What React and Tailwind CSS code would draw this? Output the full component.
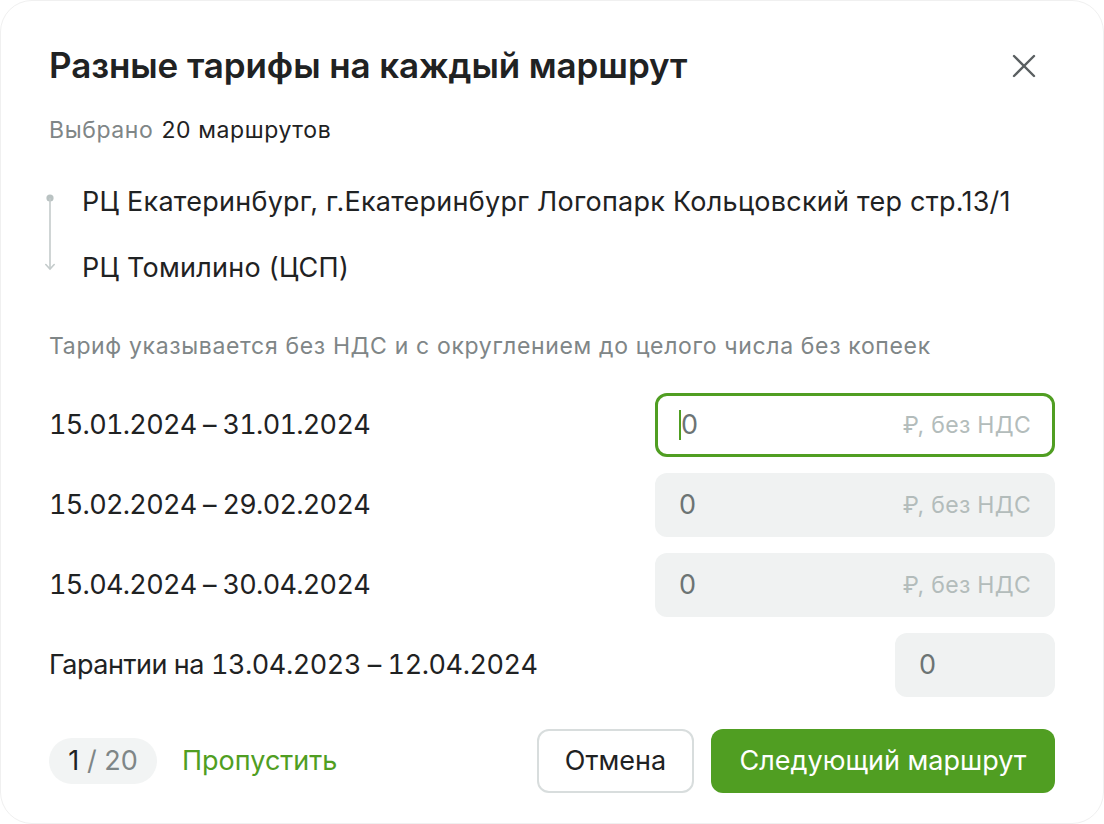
import React from "react";

function Field({ value, suffix, focused, narrow }) {
  return (
    <div
      className={
        "flex items-center h-[64px] rounded-[12px] text-[27px] " +
        (narrow ? "w-[160px] px-[24px] " : "w-[400px] ") +
        (focused
          ? "bg-white border-[3px] border-[#509e22] px-[21px]"
          : narrow
          ? "bg-[#f0f2f2]"
          : "bg-[#f0f2f2] px-[24px]")
      }
    >
      <div className="flex-1 flex items-center text-[#6c7474]">
        {focused && <span className="inline-block w-[2px] h-[30px] bg-[#509e22]" />}
        {value}
      </div>
      {suffix && (
        <div className="text-[23px] tracking-[0.3px] text-[#b3bcbb]">{suffix}</div>
      )}
    </div>
  );
}

function Row({ label, suffix, focused, narrow, labelClass }) {
  return (
    <div className="flex items-center justify-between h-[64px]">
      <div className={"text-[27px] tabular-nums text-[#1f2223] " + labelClass}>{label}</div>
      <Field value="0" suffix={suffix} focused={focused} narrow={narrow} />
    </div>
  );
}

export default function App() {
  return (
    <div
      className="w-[1104px] h-[824px] bg-white"
      style={{ fontFamily: "Inter, 'Noto Sans', sans-serif" }}
    >
      <div className="w-full h-full rounded-[32px] border border-[#f0f0f0] bg-white px-12 pt-[44px] flex flex-col">
        <div className="flex items-center justify-between h-[40px]">
          <h1 className="text-[35px] leading-[40px] font-semibold text-[#1f2223] tracking-[-0.1px]">
            Разные тарифы на каждый маршрут
          </h1>
          <button className="w-[40px] h-[40px] flex items-center justify-center mr-[11px] mt-[2px]">
            <svg width="24" height="24" viewBox="0 0 24 24" fill="none" stroke="#5a5f61" strokeWidth="2.4" strokeLinecap="round">
              <path d="M2 2 L22 22 M22 2 L2 22" />
            </svg>
          </button>
        </div>

        <div className="mt-[31px] h-[28px] leading-[28px] text-[23px] tracking-[0.6px] flex gap-[8px]">
          <span className="text-[#7f8687]">Выбрано</span>
          <span className="text-[#1f2223]">20 маршрутов</span>
        </div>

        <div className="mt-[42px] flex">
          <div className="w-[33px] relative">
            <svg width="12" height="80" viewBox="0 0 12 80" className="absolute left-[-5px] top-[8px]">
              <circle cx="6" cy="4" r="3.6" fill="#b9c2c2" />
              <line x1="6" y1="4" x2="6" y2="75" stroke="#c4cbcb" strokeWidth="1.6" />
              <path d="M1.8 70.5 L6 75 L10.2 70.5" stroke="#c4cbcb" strokeWidth="1.6" fill="none" strokeLinecap="round" />
            </svg>
          </div>
          <div className="flex flex-col gap-[34px] text-[27px] tracking-[0.25px] text-[#1f2223] leading-[32px]">
            <div>РЦ Екатеринбург, г.Екатеринбург Логопарк Кольцовский тер стр.13/1</div>
            <div>РЦ Томилино (ЦСП)</div>
          </div>
        </div>

        <div className="mt-[48px] h-[28px] leading-[28px] text-[23px] tracking-[0.65px] text-[#7f8687]">
          Тариф указывается без НДС и с округлением до целого числа без копеек
        </div>

        <div className="mt-[33px] flex flex-col gap-[16px]">
          <Row label="15.01.2024 – 31.01.2024" suffix="₽, без НДС" focused labelClass="tracking-[-0.7px]" />
          <Row label="15.02.2024 – 29.02.2024" suffix="₽, без НДС" labelClass="tracking-[-0.7px]" />
          <Row label="15.04.2024 – 30.04.2024" suffix="₽, без НДС" labelClass="tracking-[-0.7px]" />
          <Row label="Гарантии на 13.04.2023 – 12.04.2024" narrow labelClass="tracking-[-0.45px]" />
        </div>

        <div className="mt-[32px] flex items-center justify-between h-[64px]">
          <div className="flex items-center gap-[25px]">
            <div className="h-[46px] w-[108px] justify-center rounded-full bg-[#f2f4f4] flex items-center text-[27px]">
              <span className="text-[#1f2223]">1</span>
              <span className="text-[#7f8687]">&nbsp;/ 20</span>
            </div>
            <span className="text-[27px] text-[#509e22]">Пропустить</span>
          </div>
          <div className="flex items-center gap-[17px]">
            <button className="h-[64px] w-[157px] rounded-[12px] border-2 border-[#d8dddd] bg-white text-[27px] text-[#1f2223]">
              Отмена
            </button>
            <button className="h-[64px] w-[344px] rounded-[12px] bg-[#509e22] text-[27px] text-white">
              Следующий маршрут
            </button>
          </div>
        </div>
      </div>
    </div>
  );
}
